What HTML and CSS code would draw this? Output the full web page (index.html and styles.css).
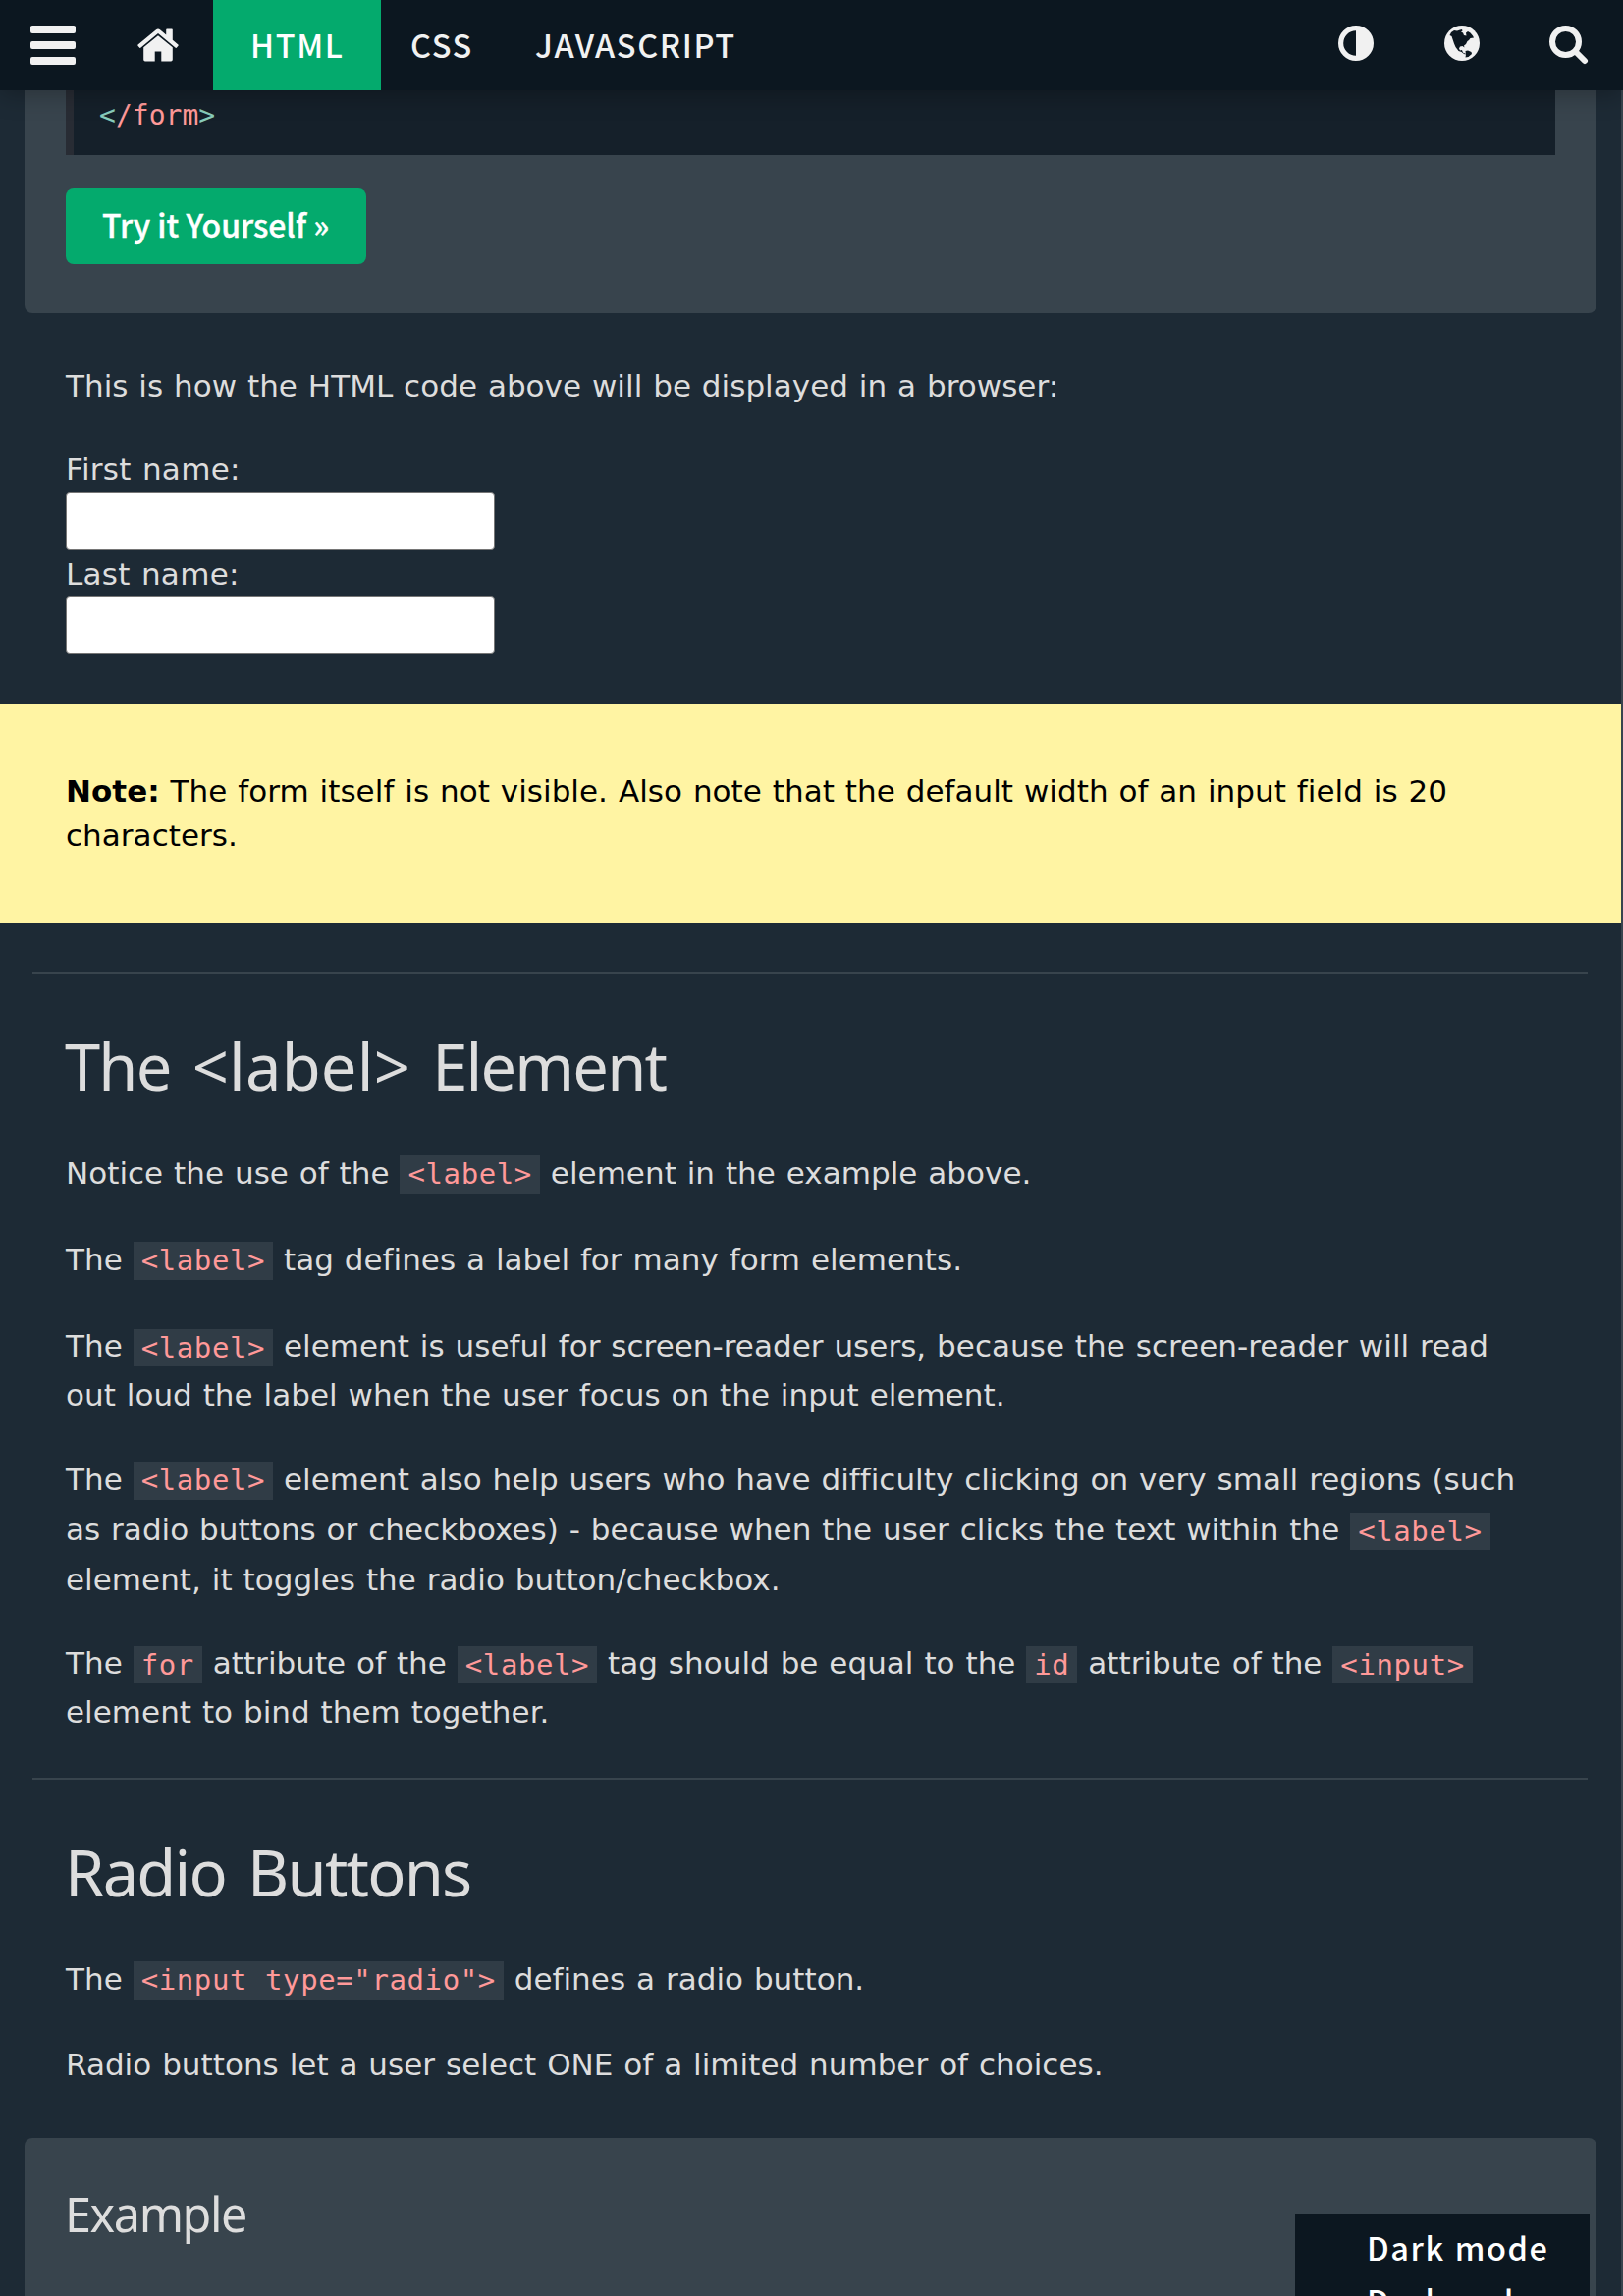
FILE: index.html
```html
<!DOCTYPE html>
<html lang="en">
<head>
<meta charset="utf-8">
<title>HTML Forms</title>
<link rel="stylesheet" href="styles.css">
</head>
<body>
<header class="topnav">
  <a class="nav-bars"><i></i><i></i><i></i></a>
  <a class="nav-home"><svg viewBox="0 0 1792 1792"><path d="M1472 992v480q0 26-19 45t-45 19h-384v-384h-256v384h-384q-26 0-45-19t-19-45v-480q0-1 .5-3t.5-3l575-474 575 474q1 2 1 6zm223-69l-62 74q-8 9-21 11h-3q-13 0-21-7l-692-577-692 577q-12 8-24 7-13-2-21-11l-62-74q-8-10-7-23.5t11-21.5l719-599q32-26 76-26t76 26l244 204v-195q0-14 9-23t23-9h192q14 0 23 9t9 23v408l219 182q10 8 11 21.5t-7 23.5z"/></svg></a>
  <a class="nav-link active">HTML</a>
  <a class="nav-link css">CSS</a>
  <a class="nav-link js">JAVASCRIPT</a>
  <div class="nav-icons">
    <svg class="ic-adjust" viewBox="0 0 36 36"><circle cx="18" cy="18" r="15.4" fill="none" stroke="#f1f1f1" stroke-width="5.2"/><path d="M18 3a15 15 0 0 1 0 30z"/></svg>
    <svg class="ic-globe" viewBox="0 0 36 36"><circle cx="18" cy="18" r="18"/><path class="land" d="M5.500 10L7 7l3-2 3 .5 3-1 2-.5.5 1.500-1.500 1 2 1 1 2.500 2.500.5-.5-3 2-1.500 2.500 1.500 2.500 3 1 2-3.500.5-1.500 2-1.500 1-1.500 3-2 1.500.5 2-2-1.500-2.500.5-1 2 1 2 2-.5.5 1.500 1 1.500 2 .5.500 1-2-.5-2.500-2-3-1-3-4-1.500-3.500L7.500 11z"/><path class="land" d="M21.500 26l2.500-.5 3.500 1.500.5 2-3.500 3-3 .5.5-3z"/></svg>
    <svg class="ic-search" viewBox="0 0 40 40"><circle cx="16.500" cy="16.500" r="13.500"/><path d="M26.500 26.500L36 36"/></svg>
  </div>
</header>
<main class="page">
  <section class="example first">
    <div class="code-box"><span class="br">&lt;</span>/form<span class="br">&gt;</span></div>
    <a class="try-btn">Try it Yourself »</a>
  </section>
  <p class="intro">This is how the HTML code above will be displayed in a browser:</p>
  <form class="names">
    <label for="fn">First name:</label>
    <input id="fn" type="text">
    <label for="ln">Last name:</label>
    <input id="ln" type="text">
  </form>
  <div class="note"><b>Note:</b> The form itself is not visible. Also note that the default width of an input field is 20<br>characters.</div>
  <hr>
  <section class="prose">
    <h2>The <span class="tag">&lt;label&gt;</span> Element</h2>
    <p>Notice the use of the <code>&lt;label&gt;</code> element in the example above.</p>
    <p>The <code>&lt;label&gt;</code> tag defines a label for many form elements.</p>
    <p>The <code>&lt;label&gt;</code> element is useful for screen-reader users, because the screen-reader will read<br>out loud the label when the user focus on the input element.</p>
    <p>The <code>&lt;label&gt;</code> element also help users who have difficulty clicking on very small regions (such<br>as radio buttons or checkboxes) - because when the user clicks the text within the <code>&lt;label&gt;</code><br>element, it toggles the radio button/checkbox.</p>
    <p>The <code>for</code> attribute of the <code>&lt;label&gt;</code> tag should be equal to the <code>id</code> attribute of the <code>&lt;input&gt;</code><br>element to bind them together.</p>
  </section>
  <hr class="tight">
  <section class="prose">
    <h2>Radio Buttons</h2>
    <p>The <code>&lt;input type="radio"&gt;</code> defines a radio button.</p>
    <p>Radio buttons let a user select ONE of a limited number of choices.</p>
  </section>
  <section class="example second"><h3>Example</h3></section>
</main>
<div class="mode-menu"><span>Dark mode</span><span>Dark code</span></div>
</body>
</html>
```

FILE: styles.css
```css
* { box-sizing: border-box; }
html, body { height: 2339px; overflow: hidden; }
body { margin: 0; background: #1d2a35; color: #ddd; font: 31px/50px "DejaVu Sans", sans-serif; letter-spacing: .03px; word-spacing: 1px; white-space: nowrap; border-right: 2px solid #38444d; }
.topnav { position: absolute; z-index: 2; top: 0; left: 0; width: 1653px; height: 92px; display: flex; align-items: center; background: #0c1720; color: #f1f1f1; box-shadow: 0 4px 24px rgba(0,0,0,.28); font: 500 32.5px/90px "Noto Sans CJK JP", sans-serif; letter-spacing: 1.6px; }
svg { display: block; fill: #f1f1f1; }
.nav-bars { width: 46px; margin-left: 31px; display: grid; gap: 8px; }
.nav-bars i { height: 8px; border-radius: 2px; background: #f1f1f1; }
.nav-home { margin-left: 61px; }
.nav-home svg { width: 46px; height: 46px; }
.nav-link { height: 92px; }
.active { width: 171px; margin-left: 33px; padding-left: 38px; background: #04aa6d; color: #fff; }
.css { padding-left: 30px; width: 157px; }
.nav-icons { margin-left: auto; margin-right: 35px; display: flex; gap: 72px; align-items: center; padding-bottom: 4px; }
.ic-adjust, .ic-globe { width: 36px; height: 36px; }
.ic-search { width: 40px; height: 40px; margin: 3px 0 0 -1px; fill: none; stroke: #f1f1f1; stroke-width: 6; stroke-linecap: round; }
.land { fill: #0c1720; }
.page { height: 2339px; }
.example { margin: 0 25px; background: #38444d; padding: 0 42px; }
.first { height: 319px; border-radius: 0 0 8px 8px; padding-top: 92px; }
.code-box { height: 66px; border-left: 8px solid #282c34; background: #15202a; padding-left: 26px; color: #ff9999; font: 28px/52px "DejaVu Sans Mono", monospace; }
.br { color: #88ccbb; }
.try-btn { display: block; width: 306px; height: 77px; margin-top: 34px; padding-left: 37px; background: #04aa6d; border-radius: 8px; color: #fff; font: 500 32px/73px "Noto Sans CJK JP", sans-serif; letter-spacing: 0; word-spacing: 0; -webkit-text-stroke: .4px #fff; }
p { margin: 0; }
.intro { margin: 49px 0 0 67px; }
.names { margin: 35px 0 0 67px; display: grid; width: 437px; letter-spacing: .3px; }
.names input { width: 437px; height: 59px; border: 1px solid #767676; border-radius: 4px; background: #fff; margin: 0; }
.names label { height: 48px; line-height: 50px; }
.names input + label { height: 47px; }
.note { margin: 51px 0 0; height: 223px; padding: 67px; background: #fff4a3; color: #000; line-height: 45px; letter-spacing: .04px; }
hr { margin: 50px 34px 0 33px; height: 2px; border: 0; background: #38444d; }
hr.tight { margin-top: 42px; }
.prose { padding-left: 67px; line-height: 47.6px; }
h2 { margin: 50.5px 0 42px -1px; font: 400 65px/86px "Noto Sans", sans-serif; letter-spacing: -1.8px; word-spacing: 7px; }
.tag { letter-spacing: .2px; }
.prose p { margin-bottom: 37px; }
.prose p:last-child { margin-bottom: 0; }
code { padding: 1.5px 8px 3px; background: #303c46; color: #ff9999; font: 29px/51.3px "DejaVu Sans Mono", monospace; letter-spacing: .6px; word-spacing: 0; }
.second { height: 161px; margin-top: 51px; border-radius: 8px 8px 0 0; padding-top: 45px; }
h3 { margin: 0 0 0 -1px; font: 400 48.5px/64px "Noto Sans", sans-serif; letter-spacing: -1.4px; }
.mode-menu { position: absolute; left: 1319px; top: 2255px; width: 300px; height: 84px; background: #0c1720; color: #fff; padding: 7px 0 0 73px; display: grid; grid-auto-rows: 54px; overflow: hidden; font: 500 32.5px/54px "Noto Sans CJK JP", sans-serif; letter-spacing: 1.6px; }
```
